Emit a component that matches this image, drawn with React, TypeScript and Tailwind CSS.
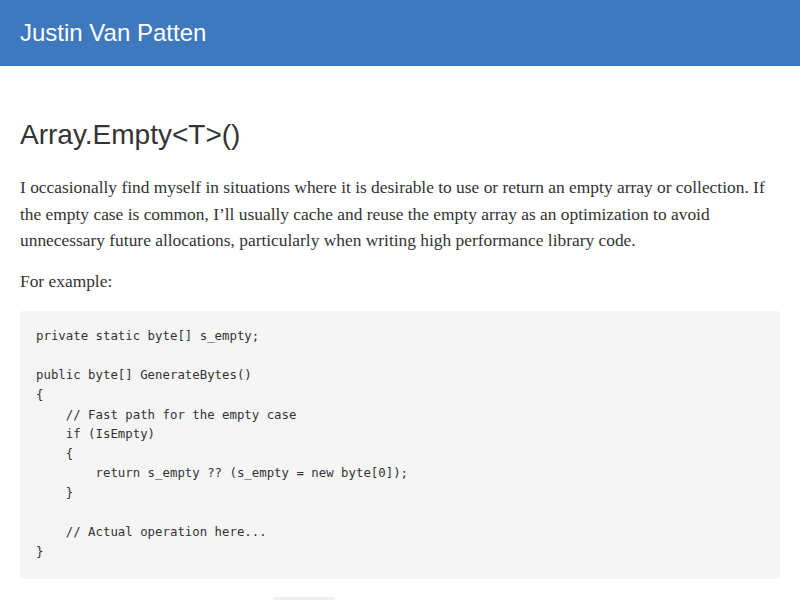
export default function App() {
  const code = `private static byte[] s_empty;

public byte[] GenerateBytes()
{
    // Fast path for the empty case
    if (IsEmpty)
    {
        return s_empty ?? (s_empty = new byte[0]);
    }

    // Actual operation here...
}`;

  return (
    <div className="w-[800px] h-[600px] overflow-hidden bg-white">
      {/* Header */}
      <header className="h-[66px] bg-[#3e78bf] flex items-center px-5">
        <h2 className="text-white text-[24px] font-['Liberation_Sans',Arial,sans-serif]">
          Justin Van Patten
        </h2>
      </header>

      {/* Post */}
      <main className="px-5">
        <h1 className="mt-[52px] text-[28px] leading-[34px] text-[#333] font-['Liberation_Sans',Arial,sans-serif]">
          Array.Empty&lt;T&gt;()
        </h1>
        <p className="mt-[22px] text-[17.4px] leading-[26.5px] text-[#333] font-['Liberation_Serif',Georgia,serif]">
          I occasionally find myself in situations where it is desirable to use or return an empty array or collection. If
          the empty case is common, I’ll usually cache and reuse the empty array as an optimization to avoid
          unnecessary future allocations, particularly when writing high performance library code.
        </p>
        <p className="mt-[14px] text-[17.4px] leading-[26.5px] text-[#333] font-['Liberation_Serif',Georgia,serif]">
          For example:
        </p>
        <pre className="mt-[17px] bg-[#f5f5f5] rounded-[3px] p-4 text-[12.36px] leading-[19.64px] text-[#333] font-['DejaVu_Sans_Mono',Consolas,monospace]">
          {code}
        </pre>
        <div className="mt-[18px] ml-[253px] w-[62px] h-[6px] bg-[#f0f0f0] rounded-t-[2px]" />
      </main>
    </div>
  );
}
